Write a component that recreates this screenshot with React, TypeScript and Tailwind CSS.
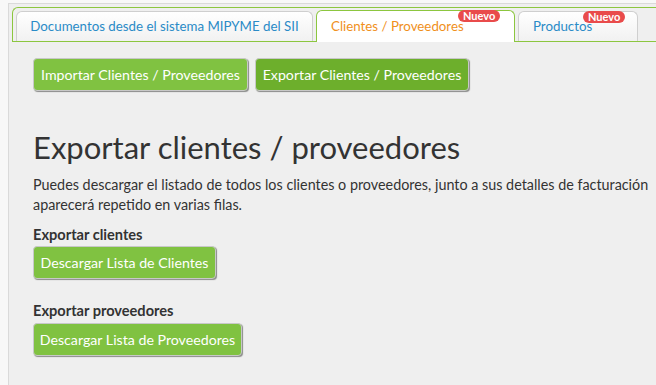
import React from 'react';

const font = { fontFamily: 'Lato, "Open Sans", sans-serif' };

const Badge: React.FC<{ className: string }> = ({ className }) => (
  <span
    className={`absolute top-[-1px] h-[12px] px-[5px] rounded-full bg-[#e94b4b] text-white text-[11px] leading-[12px] font-bold ${className}`}
  >
    Nuevo
  </span>
);

const GreenButton: React.FC<{ children: React.ReactNode; active?: boolean; w: string }> = ({ children, active, w }) => (
  <button
    className={`h-[33px] ${w} rounded-[4px] border border-[#c8c8c8] shadow-[1px_1px_1px_#8a8a8a] text-white text-[14.2px] ${
      active ? 'bg-[#6daf2c]' : 'bg-[#80c241]'
    }`}
  >
    {children}
  </button>
);

export default function App() {
  return (
    <div className="w-[656px] h-[385px] overflow-hidden bg-[#f8f8f8] pl-2 pt-[3px]" style={font}>
      <div className="h-[382px] border-l border-t border-[#dadada] bg-[#efefef] pl-[3px] pt-[3px]">
        {/* tabs */}
        <div className="flex items-end gap-[3px] h-[35px] border border-r-0 border-[#8cc63f] rounded-tl-[6px] pl-[3px]">
          <div className="h-[30px] w-[297px] flex items-center justify-center rounded-t-[6px] border border-b-0 border-[#cfcfcf] bg-gradient-to-b from-white to-[#f1f1f1] text-[#2a8bc7] text-[13.3px]">
            Documentos desde el sistema MIPYME del SII
          </div>
          <div className="relative -mb-px h-[32px] w-[199px] flex items-center pl-[14px] rounded-t-[6px] border border-b-0 border-[#8cc63f] bg-white text-[#f0901c] text-[13.3px]">
            Clientes / Proveedores
            <Badge className="left-[141px]" />
          </div>
          <div className="relative h-[30px] w-[120px] flex items-center pl-[14px] rounded-t-[6px] border border-b-0 border-[#cfcfcf] bg-gradient-to-b from-white to-[#f1f1f1] text-[#2a8bc7] text-[13.3px]">
            Productos
            <Badge className="left-[64px]" />
          </div>
        </div>

        <div className="pl-[21px] pt-[16px]">
          <div className="flex gap-[7px]">
            <GreenButton w="w-[215px]">Importar Clientes / Proveedores</GreenButton>
            <GreenButton w="w-[214px]" active>
              Exportar Clientes / Proveedores
            </GreenButton>
          </div>

          <h1 className="mt-[36px] text-[31px] leading-[40px] text-[#333]">Exportar clientes / proveedores</h1>
          <p className="mt-[8px] text-[14.35px] leading-[20px] text-[#333] whitespace-nowrap">
            Puedes descargar el listado de todos los clientes o proveedores, junto a sus detalles de facturación
            <br />
            aparecerá repetido en varias filas.
          </p>

          <div className="mt-[10px] text-[14.6px] leading-[20px] font-bold text-[#333]">Exportar clientes</div>
          <div className="mt-[1px]">
            <GreenButton w="w-[183px]">Descargar Lista de Clientes</GreenButton>
          </div>

          <div className="mt-[22px] text-[14.6px] leading-[20px] font-bold text-[#333]">Exportar proveedores</div>
          <div className="mt-[2px]">
            <GreenButton w="w-[209px]">Descargar Lista de Proveedores</GreenButton>
          </div>
        </div>
      </div>
    </div>
  );
}
